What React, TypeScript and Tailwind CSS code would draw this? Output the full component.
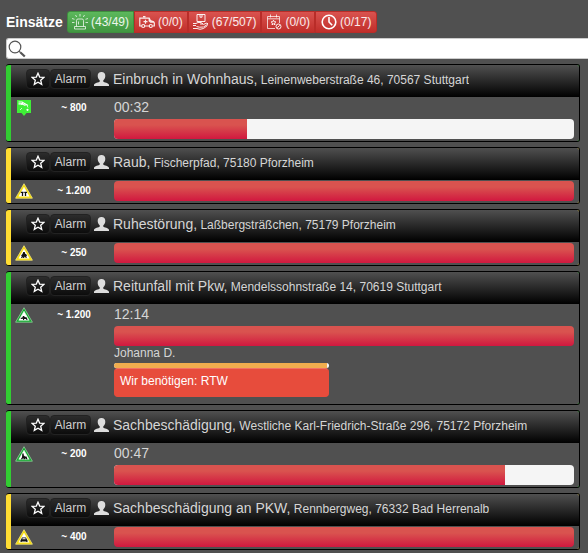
import type { ReactNode } from "react";

type Tone = "green" | "yellow";
type SignKind = "pin" | "people" | "party" | "horse" | "damage" | "car";

interface Mission {
  title: string;
  address: string;
  tone: Tone;
  sign: SignKind;
  credits: string;
  progress: number;
  time?: string;
  patient?: { name: string; progress: number; need: string };
}

const missions: Mission[] = [
  { title: "Einbruch in Wohnhaus,", address: "Leinenweberstraße 46, 70567 Stuttgart", tone: "green", sign: "pin", credits: "~ 800", progress: 29, time: "00:32" },
  { title: "Raub,", address: "Fischerpfad, 75180 Pforzheim", tone: "yellow", sign: "people", credits: "~ 1.200", progress: 100 },
  { title: "Ruhestörung,", address: "Laßbergsträßchen, 75179 Pforzheim", tone: "yellow", sign: "party", credits: "~ 250", progress: 100 },
  {
    title: "Reitunfall mit Pkw,", address: "Mendelssohnstraße 14, 70619 Stuttgart", tone: "green", sign: "horse", credits: "~ 1.200", progress: 100, time: "12:14",
    patient: { name: "Johanna D.", progress: 99, need: "Wir benötigen: RTW" },
  },
  { title: "Sachbeschädigung,", address: "Westliche Karl-Friedrich-Straße 296, 75172 Pforzheim", tone: "green", sign: "damage", credits: "~ 200", progress: 85, time: "00:47" },
  { title: "Sachbeschädigung an PKW,", address: "Rennbergweg, 76332 Bad Herrenalb", tone: "yellow", sign: "car", credits: "~ 400", progress: 100 },
];

function LineIcon({ children }: { children: ReactNode }) {
  return (
    <svg aria-hidden="true" className="size-4 shrink-0" viewBox="0 0 16 16" fill="none" stroke="currentColor" strokeWidth="1">
      {children}
    </svg>
  );
}

const SirenIcon = () => (
  <LineIcon>
    <path strokeWidth=".8" d="M4.500 12.500V6.500a1.500 1.500 0 0 1 1.500-1.500h4a1.500 1.500 0 0 1 1.500 1.500v6M2.500 12.500h11v2.500h-11zM6.500 7.500v3M8 0v2.500M3.500 1l1.200 2M12.500 1l-1.200 2M0 4.500l2.500.8M16 4.500l-2.500.8M0 8.500h2.500M13.500 8.500H16" />
  </LineIcon>
);
const AmbulanceIcon = () => (
  <LineIcon>
    <path strokeWidth="1.200" d="M2.500 12H.8V4.200h9.400l1.200 2.300 3.200 1.200.7 1.300v3h-1.600M6 12h4M10.200 4.200V7l1.500 1.200h3M4 2.700h2.500M6.500 5.700v4M4.500 7.700h4" />
    <circle cx="4.200" cy="12" r="1.500" strokeWidth="1.200" />
    <circle cx="11.800" cy="12" r="1.500" strokeWidth="1.200" />
  </LineIcon>
);
const DeliveryIcon = () => (
  <LineIcon>
    <path d="M4 .5h8v7H4zM7 .5v2.700h2V.5M0 9.500h3l2-1h3l2 1.500H7M3.500 12.500l3 .7 4-.2 4.500-3-1-1-3.800 1.500M0 11.500h3M0 14.500h4l3 .8 3.500-.8 4-3" />
  </LineIcon>
);
const CalendarIcon = () => (
  <LineIcon>
    <path strokeWidth=".8" d="M9 14.500H1.500v-12h12V9M1.500 4.800h12M4.500.5v3M10.500.5v3" />
    <path d="M7.500 6.200l.7 1.500 1.700.2-1.300 1.100.4 1.800-1.500-.9-1.500.9.4-1.800-1.300-1.100 1.700-.2z" />
    <circle cx="12.500" cy="12.500" r="2.500" />
    <path d="M11.200 13.700l2.600-2.400" />
  </LineIcon>
);
const ClockIcon = () => (
  <LineIcon>
    <circle cx="8" cy="8" r="6.800" strokeWidth="1.600" stroke="#fff" />
    <path strokeWidth="1.600" stroke="#fff" d="M8 3v5l3.200 3.200" />
  </LineIcon>
);

const filters = [
  { label: "Notfälle", count: "(43/49)", icon: <SirenIcon />, active: true },
  { label: "Krankentransporte", count: "(0/0)", icon: <AmbulanceIcon />, active: false },
  { label: "Verbandseinsätze", count: "(67/507)", icon: <DeliveryIcon />, active: false },
  { label: "Veranstaltungen", count: "(0/0)", icon: <CalendarIcon />, active: false },
  { label: "Geplante Einsätze", count: "(0/17)", icon: <ClockIcon />, active: false },
];

const glyphs: Record<Exclude<SignKind, "pin">, ReactNode> = {
  people: (
    <>
      <path d="M7.500 9v4M10.500 9v4" stroke="#111" strokeWidth="1.300" />
      <path d="M5.800 9.400h2.700M9.300 9.400H12" stroke="#111" strokeWidth="1.200" />
    </>
  ),
  party: <path d="M8.200 7h1.600l.2 1.500 1.500 1 .5 1.500-.8.200.6 1.800h-1l-.9-1.600-.9 1.600H8l.2-1.600-1 1.600H6l.8-2L6 10.500l1.500-1.500z" />,
  horse: <path d="M5.500 11l1.800-.5L8 9l1 .1.800.9 2 .4.800 2.600h-1l-.8-1-1.500.1-.4.900H8v-1.200l-2 .2z" />,
  damage: <path d="M7.300 7.500h1.400v1.700L10 10.500h1.500l1 2.700h-1.200l-.5-1-1 1H8.600L8.200 12l-1 1.200H5.800l1.200-2z" />,
  car: <path fillRule="evenodd" d="M7 8.500h4l.9 1.900.6.600V13h-1.200v-.6H6.700v.6H5.500v-2l.6-.600zM7.600 9.300l-.4 1h3.600l-.4-1z" />,
};

function Sign({ kind, tone }: { kind: SignKind; tone: Tone }) {
  if (kind === "pin") {
    return (
      <svg aria-hidden="true" className="h-4 w-[18px]" viewBox="0 0 18 16">
        <path d="M2 0h14v13h-4.500L9 16l-2.500-3H2z" fill="#3fee37" />
        <path d="M3.500 2h3.500l6 3.500M3.500 3.800h3l4 1.700" fill="none" stroke="#fff" strokeWidth="1.200" />
        <path d="M6 4.500l2-1.500" fill="none" stroke="#fff" strokeWidth="1.500" />
        <path d="M12 5.500l1 2M5 10l2-2" fill="none" stroke="#c9f9c5" strokeWidth="1" />
        <circle cx="12.500" cy="9.800" r="1.100" fill="#fff" />
      </svg>
    );
  }
  return (
    <svg aria-hidden="true" className="h-4 w-[18px]" viewBox="0 0 18 16">
      <path d="M9 .700L17.400 15.200H.6z" fill={tone === "green" ? "#10a82c" : "#f5dc00"} stroke={tone === "green" ? "#8fcf99" : "#f2e47a"} strokeWidth=".8" strokeLinejoin="round" />
      <path d="M9 4.200L14.200 13.300H3.800z" fill="#fff" stroke="#fff" strokeWidth=".5" />
      <g fill="#111">{glyphs[kind]}</g>
    </svg>
  );
}

const barFill = "h-full bg-linear-to-b/srgb from-[#d9534f] from-30% to-[#d1183f]";
const smallButton = "h-5 rounded-[4px] border border-[#222] bg-linear-to-b/srgb from-[#2c2c2c] to-[#0c0c0c] text-xs leading-4 text-[#d0d0d0]";

function MissionCard({ mission }: { mission: Mission }) {
  const { title, address, tone, sign, credits, progress, time, patient } = mission;
  return (
    <article className={`overflow-hidden rounded-[3px] border-y border-r border-black border-l-0 ${tone === "green" ? "bg-[#32cd32]" : "bg-[#ffdd33]"} pl-[5px]`}>
      <header className="flex h-8 items-center bg-linear-to-b/srgb from-[#505050] to-black pb-1 pl-[15px]">
        <div className="flex">
          <button type="button" aria-label="Favorit" className={`${smallButton} flex w-6 items-center justify-center`}>
            <svg aria-hidden="true" className="size-[14px]" viewBox="0 0 14 14" fill="none" stroke="#fff" strokeWidth="1.300">
              <path d="M7 1.200l1.700 3.900 4.200.3-3.200 2.800 1 4.200L7 10.200l-3.700 2.200 1-4.200L1.100 5.400l4.200-.3z" />
            </svg>
          </button>
          <button type="button" className={`${smallButton} w-[41px]`}>Alarm</button>
        </div>
        <svg aria-hidden="true" className="ml-[3px] h-[14px] w-[15px] shrink-0" viewBox="0 0 15 14" fill="#ddd">
          <path d="M7.500 0C10 0 11.300 1.500 11.300 3.900c0 1.900-.9 3.400-2 4.300v1.300c.6 1.200 5.700 1.300 5.700 3.500v1H0v-1c0-2.200 5.100-2.300 5.700-3.500V8.200c-1.100-.9-2-2.400-2-4.300C3.700 1.500 5 0 7.500 0z" />
        </svg>
        <h2 className="ml-1 truncate text-sm leading-5 text-[#d6d6d6]">
          <a href="#einsatz">
            {title}
            <small className="text-xs"> {address}</small>
          </a>
        </h2>
      </header>
      <div className={`flex bg-[#505050] pr-[5px] pl-1 ${patient ? "pb-[7px]" : "pb-[2px]"}`}>
        <div className="w-[25px] shrink-0 pt-[3px]">
          <Sign kind={sign} tone={tone} />
        </div>
        <div className="mr-[6px] w-[68px] shrink-0 pt-1 text-center text-[10px] leading-[14px] font-bold text-white">{credits}</div>
        <div className="min-w-0 grow">
          {time ? <div className="h-[22px] text-sm leading-5 text-[#d6d6d6]">{time}</div> : <div className="h-px" />}
          <div role="progressbar" aria-label={title} aria-valuenow={progress} className="h-5 overflow-hidden rounded-[4px] bg-[#f5f5f5]">
            <div className={barFill} style={{ width: `${progress}%` }} />
          </div>
          {patient && (
            <>
              <div className="h-[17px] text-xs leading-[14px] text-[#d6d6d6]">{patient.name}</div>
              <div className="w-[215px]">
                <div role="progressbar" aria-label={patient.name} aria-valuenow={patient.progress} className="h-[5px] overflow-hidden rounded-[3px] bg-[#f5f5f5]">
                  <div className="h-full bg-[#f0ad4e]" style={{ width: `${patient.progress}%` }} />
                </div>
                <div className="h-[29px] rounded-[4px] border border-[#e74c3c] border-t-[#f07264] bg-[#e74c3c] px-[5px] text-xs leading-6 text-white">{patient.need}</div>
              </div>
            </>
          )}
        </div>
      </div>
    </article>
  );
}

export default function App() {
  return (
    <main className="min-h-screen bg-[#505050] pt-[11px] pl-[6px] font-['Liberation_Sans',Arial,sans-serif]">
      <div className="flex items-center">
        <h1 className="w-[61px] shrink-0 text-sm leading-5 font-bold text-white">Einsätze</h1>
        <div className="flex">
          {filters.map((f) => (
            <button
              key={f.label}
              type="button"
              title={f.label}
              className={`flex h-[22px] items-center gap-[3px] border px-1 pb-px text-xs text-white/90 first:rounded-l-[3px] last:rounded-r-[3px] last:px-[5px] ${
                f.active ? "border-[#3e8f3e] bg-linear-to-b/srgb from-[#5cb85c] to-[#419641]" : "border-[#b92c28] bg-linear-to-b/srgb from-[#d9534f] to-[#c12e2a]"
              }`}
            >
              {f.icon}
              {f.count}
            </button>
          ))}
        </div>
      </div>
      <label className="mt-[5px] flex h-[21px] items-center rounded-l-[3px] border-y border-l border-[#ccc] bg-white">
        <svg aria-hidden="true" className="ml-px size-[18px] shrink-0" viewBox="0 0 18 18" fill="none" stroke="#555">
          <circle cx="7" cy="7" r="5.800" strokeWidth="1.200" />
          <path d="M11.200 11.200l1.500 1.500" strokeWidth="1.300" />
          <path d="M12.500 12.500l4.300 4" strokeWidth="2.200" />
        </svg>
        <input type="search" aria-label="Einsätze suchen" className="h-full min-w-0 grow px-1 text-xs text-[#333] outline-none" />
      </label>
      <div className="mt-[5px] flex flex-col gap-[5px] pr-2 pb-[3px]">
        {missions.map((m) => (
          <MissionCard key={m.title} mission={m} />
        ))}
      </div>
    </main>
  );
}
